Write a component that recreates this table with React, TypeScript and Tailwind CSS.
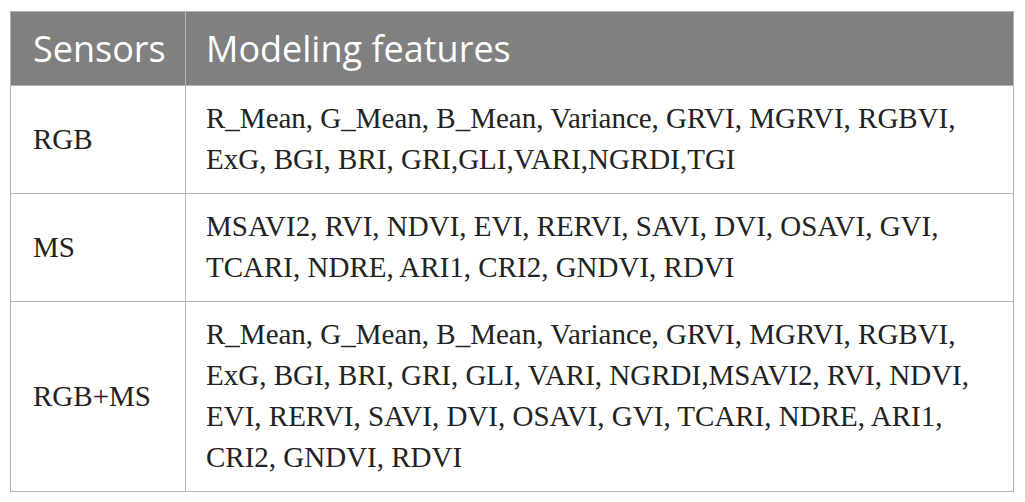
const rows = [
  {
    sensor: 'RGB',
    features: [
      'R_Mean, G_Mean, B_Mean, Variance, GRVI, MGRVI, RGBVI,',
      'ExG, BGI, BRI, GRI,GLI,VARI,NGRDI,TGI',
    ],
  },
  {
    sensor: 'MS',
    features: [
      'MSAVI2, RVI, NDVI, EVI, RERVI, SAVI, DVI, OSAVI, GVI,',
      'TCARI, NDRE, ARI1, CRI2, GNDVI, RDVI',
    ],
  },
  {
    sensor: 'RGB+MS',
    features: [
      'R_Mean, G_Mean, B_Mean, Variance, GRVI, MGRVI, RGBVI,',
      'ExG, BGI, BRI, GRI, GLI, VARI, NGRDI,MSAVI2, RVI, NDVI,',
      'EVI, RERVI, SAVI, DVI, OSAVI, GVI, TCARI, NDRE, ARI1,',
      'CRI2, GNDVI, RDVI',
    ],
  },
];

export default function App() {
  return (
    <div className="h-[502px] w-[1025px] bg-white pl-[10px] pt-[11px]">
      <table className="w-[1004px] table-fixed border-collapse border border-[#b4b4b4]">
        <colgroup>
          <col className="w-[175px]" />
          <col />
        </colgroup>
        <thead>
          <tr className="h-[74px] bg-[#808080] text-white [font-family:'Open_Sans',sans-serif] text-[36px]">
            <th className="border-r border-[#b4b4b4] pl-[22px] text-left font-normal">Sensors</th>
            <th className="pl-[20px] text-left font-normal">Modeling features</th>
          </tr>
        </thead>
        <tbody className="text-[29px] leading-[41px] text-[#222] [font-family:'Liberation_Serif',serif]">
          {rows.map((r) => (
            <tr key={r.sensor} className="border-t border-[#b4b4b4]">
              <td className="border-r border-[#b4b4b4] pl-[22px] align-middle">{r.sensor}</td>
              <td className="pt-[12px] pb-[13px] pl-[20px]">
                {r.features.map((l) => (
                  <div key={l}>{l}</div>
                ))}
              </td>
            </tr>
          ))}
        </tbody>
      </table>
    </div>
  );
}
